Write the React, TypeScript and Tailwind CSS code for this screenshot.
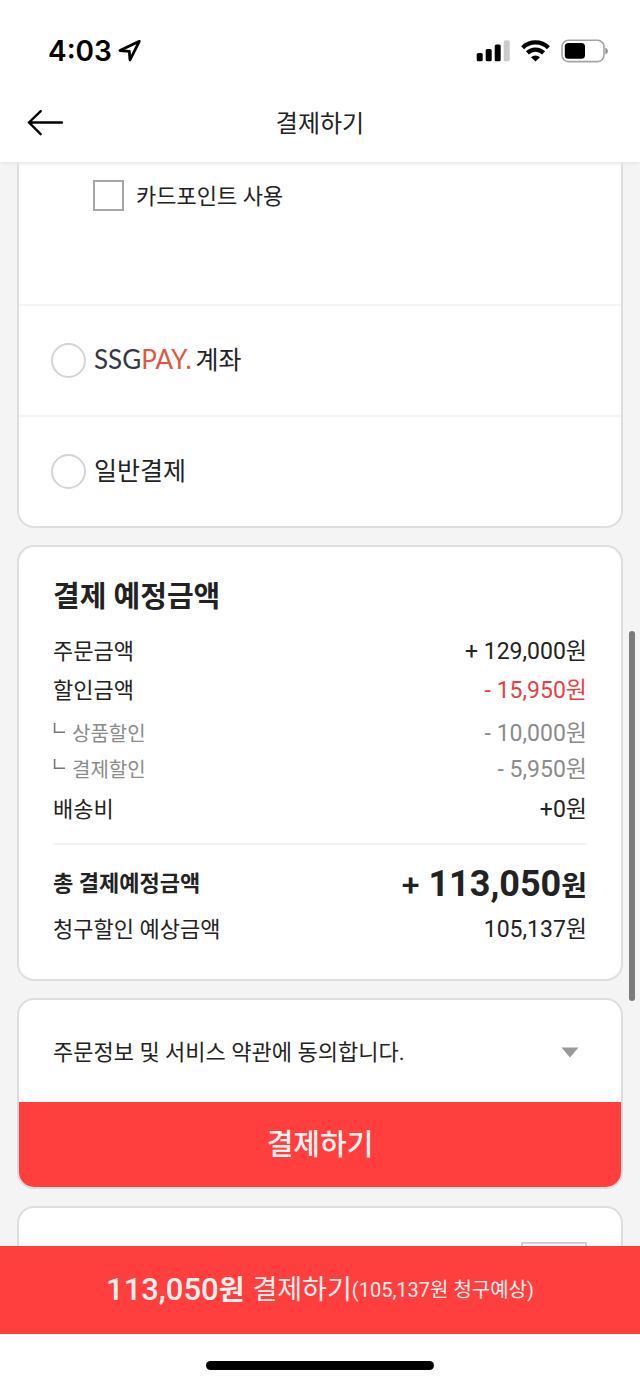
import type { ReactNode } from "react";

const krFont = "font-['Roboto','Noto_Sans_CJK_KR',sans-serif]";

function StatusBar() {
  return (
    <div className="flex h-[102px] shrink-0 items-center justify-between pr-8 pl-12">
      <div className="flex items-center gap-1.5">
        <span className="font-['Inter',sans-serif] text-[28px] leading-8 font-semibold text-black">4:03</span>
        <svg width="24" height="24" viewBox="0 0 24 24" fill="none" stroke="#000" strokeWidth="2.8" strokeLinejoin="round" aria-hidden="true">
          <path d="M21.3 2.3 2 11.6l9.3.8.7 8.6Z" />
        </svg>
      </div>
      <div className="flex items-center gap-[11px]">
        <svg width="34" height="22" viewBox="0 0 34 22" aria-hidden="true">
          <rect x="0.7" y="13" width="6" height="8.3" rx="1.6" />
          <rect x="9.7" y="9" width="6" height="12.3" rx="1.6" />
          <rect x="18.7" y="4.5" width="6" height="16.8" rx="1.6" />
          <rect x="27.7" y="0.3" width="6" height="21" rx="1.6" fill="#cbcbcb" />
        </svg>
        <svg width="29" height="22" viewBox="0 0 29 22" aria-hidden="true">
          <g fill="none" stroke="#000" strokeWidth="4.3">
            <path d="M1.6 7.7a18.4 18.4 0 0 1 25.8 0" />
            <path d="M6.4 12.9a11.6 11.6 0 0 1 16.2 0" />
          </g>
          <path d="M14.5 21.6 10 17.3a6.5 6.5 0 0 1 9 0Z" />
        </svg>
        <svg width="47" height="24" viewBox="0 0 47 24" aria-hidden="true">
          <rect x="1" y="1.2" width="42" height="21.4" rx="6.5" fill="none" stroke="#a3a3a3" strokeWidth="1.6" />
          <rect x="3.8" y="4" width="20.2" height="15.8" rx="3.6" />
          <path d="M44.4 8.4c3.2 1.4 3.2 5.6 0 7Z" fill="#8b8b8b" />
        </svg>
      </div>
    </div>
  );
}

function TitleBar() {
  return (
    <header className="relative z-10 grid h-[60px] shrink-0 grid-cols-[1fr_auto_1fr] items-start bg-white pl-[27px] shadow-[0_3px_3px_-1px_#e8e8e8]">
      <button type="button" aria-label="뒤로" className="w-[37px] pt-[7px]">
        <svg width="37" height="28" viewBox="0 0 37 28" fill="none" stroke="#000" strokeWidth="2.4" strokeLinecap="round" strokeLinejoin="round">
          <path d="M35 13.5H1.8M13.7 2.2 2 13.5l11.7 11.7" />
        </svg>
      </button>
      <h1 className="pt-0.5 pr-[27px] text-2xl leading-10 text-[#222]">결제하기</h1>
    </header>
  );
}

function PaymentOption({ children }: { children: ReactNode }) {
  return (
    <label className="flex h-[111px] items-center gap-2 border-t-2 border-[#f4f4f4] pl-8 text-[25px] leading-9 text-[#222]">
      <input type="radio" name="payment" className="size-[35px] shrink-0 appearance-none rounded-full border-2 border-[#d4d4d4] bg-white checked:border-[#ff3e3e]" />
      <span className="flex items-center gap-1">{children}</span>
    </label>
  );
}

function PaymentMethods() {
  return (
    <section className="rounded-b-[17px] border-2 border-t-0 border-[#dedede] bg-white">
      <div className="h-[142px] pt-[15px] pl-[74px]">
        <label className="inline-flex items-center gap-3 text-[22px] leading-8 text-[#222]">
          <input type="checkbox" className="size-[31px] appearance-none border-2 border-[#a6a6a6] bg-white checked:bg-[#ff3e3e]" />
          <span className="pt-1">카드포인트 사용</span>
        </label>
      </div>
      <PaymentOption>
        <span className="pb-1 font-['Lato',sans-serif] text-[26px] text-[#343746]">
          SSG<span className="text-[#e0563f]">PAY.</span>
        </span>
        <span>계좌</span>
      </PaymentOption>
      <PaymentOption>일반결제</PaymentOption>
    </section>
  );
}

type Amount = { label: string; value: string; tone?: "red" };

const amounts: Amount[] = [
  { label: "주문금액", value: "+ 129,000원" },
  { label: "할인금액", value: "- 15,950원", tone: "red" },
];

const discounts: Amount[] = [
  { label: "상품할인", value: "- 10,000원" },
  { label: "결제할인", value: "- 5,950원" },
];

function AmountRow({ label, value, tone }: Amount) {
  return (
    <div className="flex h-[39px] items-center justify-between">
      <dt className="text-[22px]">{label}</dt>
      <dd className={tone === "red" ? "pt-0.5 text-[23px] text-[#e83f43]" : "pt-0.5 text-[23px]"}>{value}</dd>
    </div>
  );
}

function Summary() {
  return (
    <section className="rounded-[17px] border-2 border-[#dedede] bg-white px-[34px] pt-[30px] pb-[30px] text-[#222]">
      <h2 className="text-[29px] leading-10 font-bold">결제 예정금액</h2>
      <dl className="pt-[15px]">
        {amounts.map((a) => (
          <AmountRow key={a.label} {...a} />
        ))}
        <div className="pt-1.5 pb-0.5 text-[#8b8b8b]">
          {discounts.map((d) => (
            <div key={d.label} className="flex h-9 items-center justify-between">
              <dt className="flex items-center gap-[7px] text-xl">
                <svg width="12" height="26" viewBox="0 0 12 26" fill="none" stroke="#777" strokeWidth="1.6" aria-hidden="true">
                  <path d="M1.6 2v9.2H12" />
                </svg>
                {d.label}
              </dt>
              <dd className="text-[23px]">{d.value}</dd>
            </div>
          ))}
        </div>
        <AmountRow label="배송비" value="+0원" />
        <div className="mt-[14px] flex items-start justify-between border-t-2 border-[#f2f2f2] pt-4">
          <dt className="text-[22px] leading-[46px] font-bold">총 결제예정금액</dt>
          <dd className="text-[36px] leading-[47px] font-bold">
            <span className="text-[32px] font-medium">+</span> 113,050<span className="text-[28px]">원</span>
          </dd>
        </div>
        <AmountRow label="청구할인 예상금액" value="105,137원" />
      </dl>
    </section>
  );
}

function Agreement() {
  return (
    <section className="overflow-hidden rounded-[17px] border-2 border-[#dedede] bg-white">
      <button type="button" aria-expanded="false" className="flex h-[102px] w-full items-center justify-between pt-[3px] pr-[42px] pl-[34px] text-left text-[22px] leading-8 text-[#222]">
        주문정보 및 서비스 약관에 동의합니다.
        <svg width="18" height="11" viewBox="0 0 18 11" fill="#999" aria-hidden="true">
          <path d="M.5.5h17L9 10.5Z" />
        </svg>
      </button>
      <button type="button" className="block h-[85px] w-full bg-[#ff3e3e] text-[29px] leading-10 font-medium text-[#fff3f1]">
        결제하기
      </button>
    </section>
  );
}

export default function App() {
  return (
    <div className={`${krFont} relative flex h-screen flex-col overflow-hidden bg-white`}>
      <StatusBar />
      <TitleBar />
      <main className="flex min-h-0 flex-1 flex-col gap-[17px] overflow-hidden bg-[#f4f4f4] px-[17px] *:shrink-0">
        <PaymentMethods />
        <Summary />
        <Agreement />
        <section className="flex justify-end rounded-t-[17px] border-2 border-b-0 border-[#dedede] bg-white px-[34px] pt-[34px]">
          <button type="button" aria-label="더보기" className="h-10 w-[66px] border-2 border-[#cfcfcf]" />
        </section>
      </main>
      <div aria-hidden="true" className="absolute top-[631px] right-[5px] h-[370px] w-[6px] rounded-full bg-[#7b7b7b]" />
      <button type="button" className="flex h-[88px] w-full shrink-0 items-center justify-center bg-[#ff3e3e] leading-10 text-[#fff0ee]">
        <span className="text-[28px] font-bold">
          <span className="text-[31px] font-medium">113,050</span>원
        </span>
        <span className="pl-2 text-[27px]">결제하기</span>
        <span className="text-xl">(105,137원 청구예상)</span>
      </button>
      <div className="flex h-[50px] shrink-0 items-end justify-center pb-[14px]">
        <div className="h-[9px] w-[228px] rounded-full bg-black" />
      </div>
    </div>
  );
}
